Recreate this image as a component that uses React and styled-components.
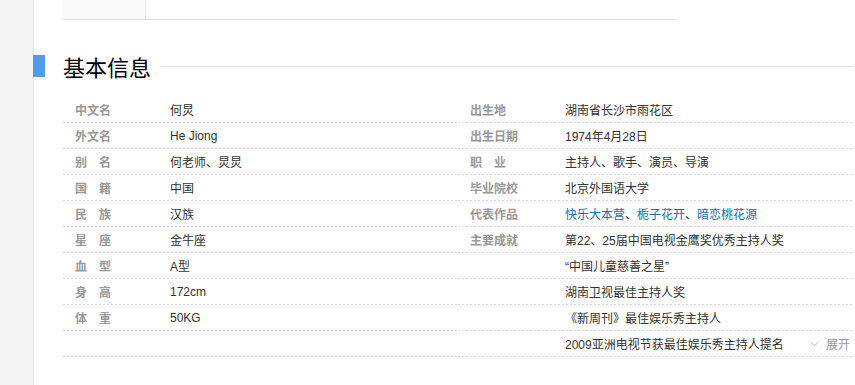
import React from "react";
import styled, { createGlobalStyle } from "styled-components";

const Global = createGlobalStyle`
  html, body { margin: 0; padding: 0; background: #fff; }
  body { font-family: "Liberation Sans", Arial, "Noto Sans CJK SC", sans-serif; font-size: 12px; color: #333; }
`;

const Page = styled.div`
  display: flex;
  min-height: 385px;
`;

const Strip = styled.div`
  width: 33px;
  flex: none;
  background: #f4f4f4;
  border-right: 1px solid #e6e6e6;
`;

const Main = styled.div`
  flex: 1;
  padding-left: 29px;
  padding-right: 2px;
`;

const TopBar = styled.div`
  width: 612px;
  height: 19px;
  border-bottom: 1px solid #dcdcdc;
  display: flex;
`;

const TopTab = styled.div`
  width: 82px;
  background: #fafafa;
  border-right: 1px solid #ececec;
`;

const Heading = styled.div`
  position: relative;
  display: flex;
  align-items: center;
  height: 22px;
  margin-top: 35px;
  &::before {
    content: "";
    position: absolute;
    left: -30px;
    top: 0;
    width: 12px;
    height: 22px;
    background: #4f9cee;
  }
`;

const Title = styled.h2`
  margin: 0;
  font-family: "Noto Sans CJK SC", sans-serif;
  font-weight: 400;
  font-size: 22px;
  line-height: 22px;
  color: #000;
`;

const Rule = styled.div`
  flex: 1;
  height: 1px;
  background: #e3e3e3;
  margin-left: 9px;
`;

const Grid = styled.div`
  display: grid;
  grid-template-columns: 395px 395px;
  margin-top: 20px;
`;

const Column = styled.div`
  display: flex;
  flex-direction: column;
`;

const Row = styled.div`
  display: flex;
  align-items: center;
  height: 26px;
  padding-bottom: 1px;
  box-sizing: border-box;
  background: repeating-linear-gradient(to right, #d9d9d9 0 2px, transparent 2px 4px) left bottom / 100% 1px no-repeat;
`;

const Label = styled.div`
  width: 95px;
  padding-left: 12px;
  flex: none;
  font-family: "Noto Sans CJK SC", sans-serif;
  font-weight: 700;
  color: #999;
  font-size: 12px;
  white-space: pre;
`;

const Value = styled.div`
  flex: 1;
  font-family: "Liberation Sans", Arial, "Noto Sans CJK SC", sans-serif;
  font-size: 12px;
  color: #333;
  white-space: nowrap;
`;

const Link = styled.a`
  color: #136ec2;
  text-decoration: none;
`;

const Expand = styled.span`
  display: flex;
  align-items: center;
  gap: 7px;
  margin-right: 3px;
  font-family: "Noto Sans CJK SC", sans-serif;
  font-size: 12px;
  color: #999;
`;

const left = [
  ["中文名", "何炅"],
  ["外文名", "He Jiong"],
  ["别　名", "何老师、炅炅"],
  ["国　籍", "中国"],
  ["民　族", "汉族"],
  ["星　座", "金牛座"],
  ["血　型", "A型"],
  ["身　高", "172cm"],
  ["体　重", "50KG"],
  ["", ""],
];

const works = ["快乐大本营", "栀子花开", "暗恋桃花源"];

const right = [
  ["出生地", "湖南省长沙市雨花区"],
  ["出生日期", "1974年4月28日"],
  ["职　业", "主持人、歌手、演员、导演"],
  ["毕业院校", "北京外国语大学"],
  ["代表作品", "works"],
  ["主要成就", "第22、25届中国电视金鹰奖优秀主持人奖"],
  ["", "“中国儿童慈善之星”"],
  ["", "湖南卫视最佳主持人奖"],
  ["", "《新周刊》最佳娱乐秀主持人"],
  ["", "2009亚洲电视节获最佳娱乐秀主持人提名", true],
];

function Chevron() {
  return (
    <svg width="9" height="6" viewBox="0 0 9 6">
      <polyline points="0.5,0.8 4.5,4.8 8.5,0.8" fill="none" stroke="#b5b5b5" strokeWidth="1" />
    </svg>
  );
}

export default function App() {
  return (
    <>
      <Global />
      <Page>
        <Strip />
        <Main>
          <TopBar>
            <TopTab />
          </TopBar>
          <Heading>
            <Title>基本信息</Title>
            <Rule />
          </Heading>
          <Grid>
            <Column>
              {left.map(([l, v], i) => (
                <Row key={i}>
                  <Label>{l}</Label>
                  <Value>{v}</Value>
                </Row>
              ))}
            </Column>
            <Column>
              {right.map(([l, v, more], i) => (
                <Row key={i}>
                  <Label>{l}</Label>
                  <Value>
                    {v === "works"
                      ? works.map((w, j) => (
                          <React.Fragment key={w}>
                            {j > 0 && "、"}
                            <Link href="#">{w}</Link>
                          </React.Fragment>
                        ))
                      : v}
                  </Value>
                  {more && (
                    <Expand>
                      <Chevron />
                      展开
                    </Expand>
                  )}
                </Row>
              ))}
            </Column>
          </Grid>
        </Main>
      </Page>
    </>
  );
}
